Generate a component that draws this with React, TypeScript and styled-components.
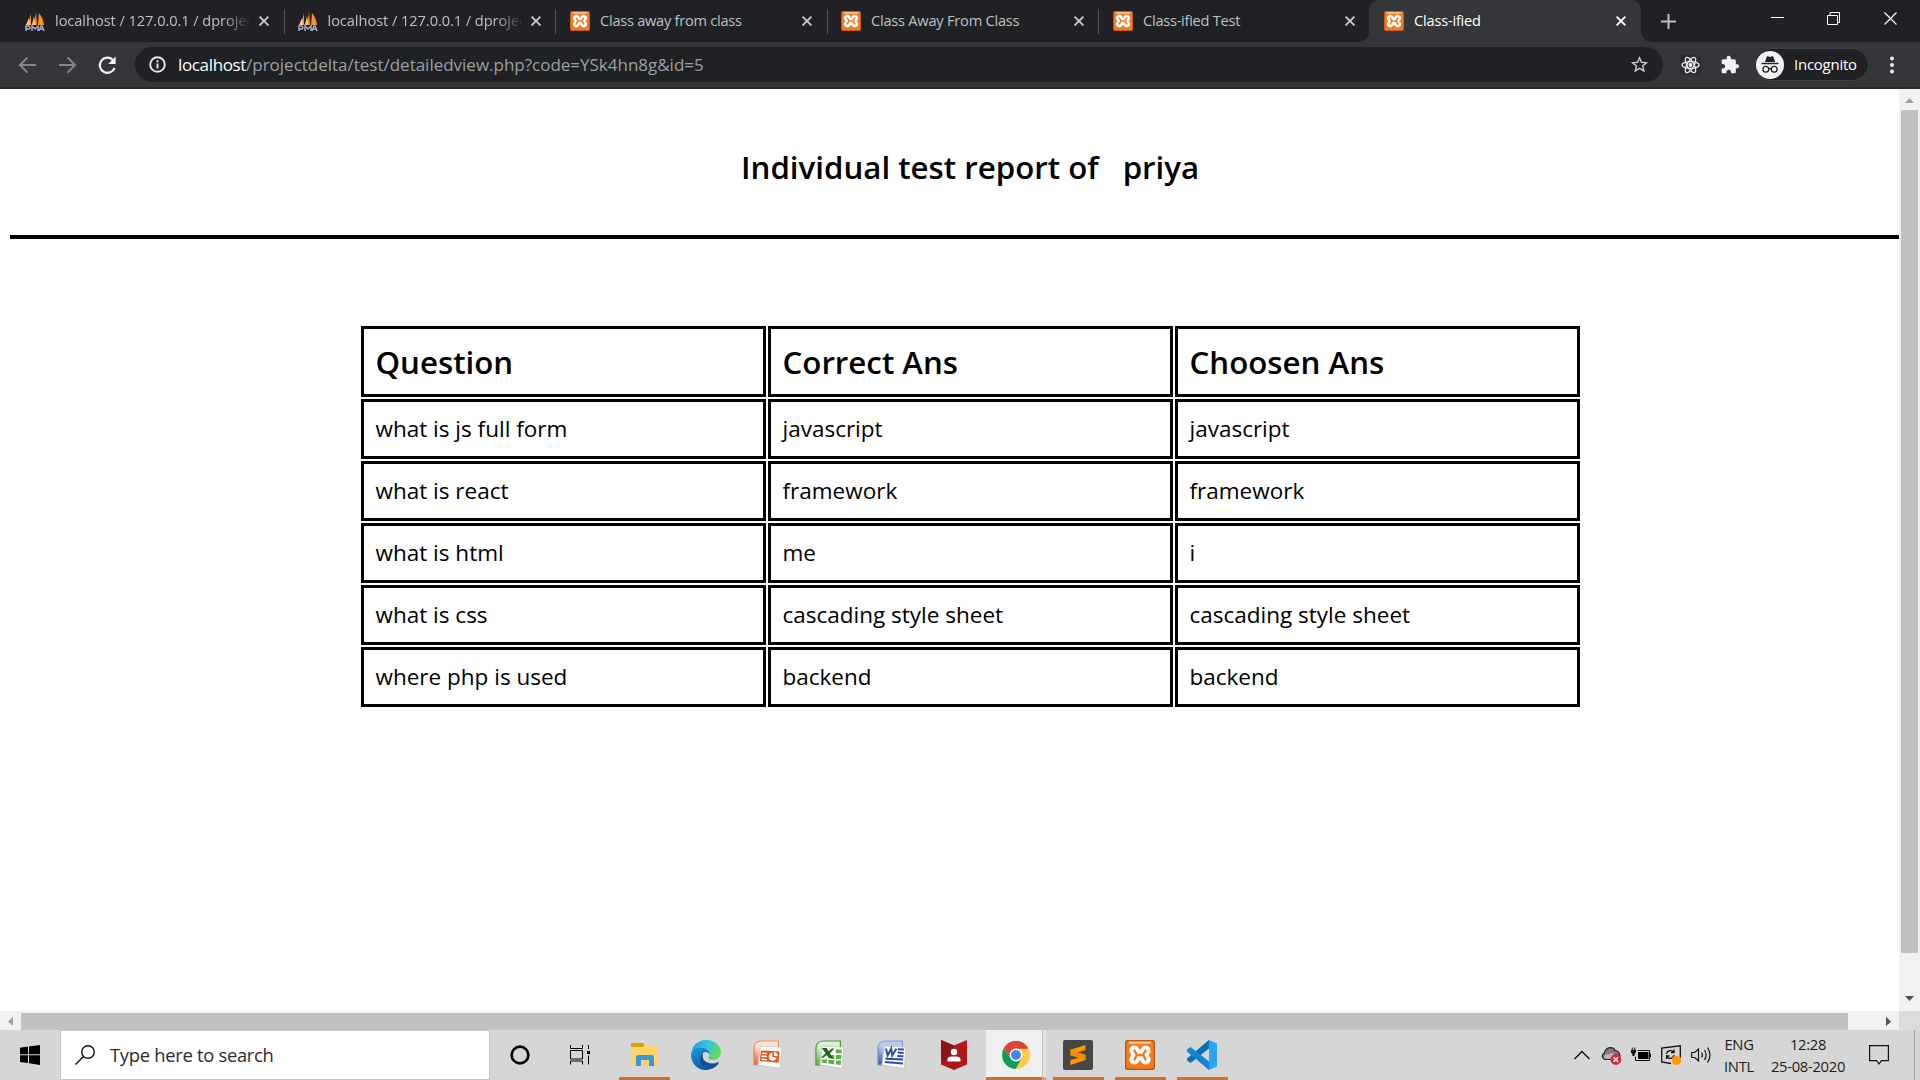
import React from 'react';
import styled, { createGlobalStyle } from 'styled-components';

const ui = `'Open Sans', 'Noto Sans', sans-serif`;

const Global = createGlobalStyle`
  * { box-sizing: border-box; }
  html, body { margin: 0; padding: 0; overflow: hidden; background: #fff; }
  svg { display: block; flex: none; overflow: visible; }
`;

const Screen = styled.div`
  width: 1920px;
  height: 1080px;
  display: flex;
  flex-direction: column;
  overflow: hidden;
  font-family: ${ui};
  background: #fff;
`;

/* ---------- tab strip ---------- */
const TabStrip = styled.div`
  height: 42px;
  flex: none;
  display: flex;
  background: #202124;
  padding-left: 13px;
`;

const Tab = styled.div<{ $active?: boolean; $line?: boolean; $lead: number }>`
  position: relative;
  width: ${p => (p.$active ? 272 : 271.5)}px;
  margin-left: ${p => (p.$active ? -1.5 : 0)}px;
  height: 42px;
  flex: none;
  display: flex;
  align-items: center;
  padding: 0 ${p => (p.$active ? 15 : 15.5)}px 0 ${p => p.$lead}px;
  gap: 10px;
  background: ${p => (p.$active ? '#35363a' : 'transparent')};
  border-radius: 10px 10px 0 0;
  color: ${p => (p.$active ? '#fff' : '#bdc1c6')};
  &::after {
    content: '';
    display: ${p => (p.$line ? 'block' : 'none')};
    position: absolute;
    right: 0;
    top: 9px;
    width: 1px;
    height: 25px;
    background: #55575b;
  }
`;

const TabCurve = styled.span<{ $side: 'left' | 'right' }>`
  position: absolute;
  bottom: 0;
  ${p => p.$side}: -10px;
  width: 10px;
  height: 10px;
  background: radial-gradient(circle at ${p => (p.$side === 'left' ? '0 0' : '100% 0')}, transparent 9.5px, #35363a 10px);
`;

const TabTitle = styled.span<{ $fade?: boolean; $spacing: number }>`
  flex: 1;
  min-width: 0;
  white-space: pre;
  font-size: 14.6px;
  line-height: 20px;
  padding-bottom: 2px;
  letter-spacing: ${p => p.$spacing}px;
  ${p => p.$fade && 'mask-image: linear-gradient(90deg, #000 168px, transparent 196px);'}
`;

const NewTab = styled.div`
  width: 76px;
  padding-left: 20px;
  display: flex;
  align-items: center;
`;

const WindowControls = styled.div`
  margin-left: auto;
  display: flex;
  padding: 12px 22px 0 0;
  gap: 43px;
`;

/* ---------- toolbar ---------- */
const Toolbar = styled.div`
  height: 47px;
  flex: none;
  display: flex;
  align-items: center;
  background: #35363a;
  border-bottom: 2px solid #28292c;
  padding-left: 17px;
`;

const NavButtons = styled.div`
  width: 118px;
  flex: none;
  display: flex;
  gap: 20px;
`;

const Omnibox = styled.div`
  width: 1528px;
  flex: none;
  height: 35px;
  border-radius: 18px;
  background: #202124;
  display: flex;
  align-items: center;
  padding: 0 12px 0 12px;
`;

const Url = styled.div`
  flex: 1;
  margin-left: 10px;
  font-size: 17px;
  line-height: 24px;
  letter-spacing: -0.01px;
  color: #9aa0a6;
  white-space: nowrap;
`;

const Host = styled.span`
  color: #fff;
  letter-spacing: -0.35px;
`;

const Extensions = styled.div`
  display: flex;
  flex: none;
  align-items: center;
  gap: 19px;
  margin-left: 17px;
`;

const Profile = styled.div`
  width: 115px;
  flex: none;
  height: 33px;
  border: 1px solid #3f4044;
  border-radius: 17px;
  background: #202124;
  margin: 0 17px 0 14px;
  padding-left: 1px;
  display: flex;
  align-items: center;
  gap: 9px;
  color: #fff;
  font-size: 14.9px;
  letter-spacing: -0.2px;
`;

const ProfileName = styled.span`
  padding: 0 0 1px 1px;
`;

/* ---------- page ---------- */
const Viewport = styled.div`
  flex: 1;
  min-height: 0;
  display: grid;
  grid-template-columns: 1899px 21px;
  grid-template-rows: 922px 19px;
`;

const Page = styled.main`
  padding-left: 10px;
  overflow: hidden;
  color: #000;
`;

const Title = styled.h1`
  margin: 0;
  height: 146px;
  padding: 57px 0 0 731px;
  font-size: 31.25px;
  line-height: 42px;
  font-weight: 600;
  white-space: pre;
  display: flex;
  gap: 24px;
`;

const Rule = styled.hr`
  margin: 0;
  border: 0;
  height: 4px;
  background: #000;
`;

const Report = styled.table`
  margin: 85px 0 0 349px;
  width: 1223px;
  border-spacing: 2px;
  table-layout: fixed;
`;

const HeadCell = styled.th`
  height: 71px;
  border: 3px solid #000;
  padding: 0 11.5px;
  text-align: left;
  font-size: 31.25px;
  line-height: 42px;
  font-weight: 600;
`;

const Cell = styled.td`
  height: 60px;
  border: 3px solid #000;
  padding: 0 11.5px 1px;
  font-size: 22.5px;
  line-height: 32px;
  font-weight: 400;
`;

const VScroll = styled.div`
  background: #f1f1f1;
  display: flex;
  flex-direction: column;
  align-items: center;
  justify-content: space-between;
  padding: 9px 0 10px;
`;
const VThumb = styled.div`
  width: 17px;
  height: 843px;
  background: #c1c1c1;
  margin: 7px 0 auto;
`;
const HScroll = styled.div`
  background: #f1f1f1;
  display: flex;
  align-items: center;
  padding: 2px 8px 0;
`;
const HThumb = styled.div`
  width: 1827px;
  height: 17px;
  background: #c1c1c1;
  margin: 0 auto 0 8px;
`;
const ScrollCorner = styled.div`
  background: #dcdcdc;
`;

/* ---------- taskbar ---------- */
const Taskbar = styled.div`
  height: 50px;
  flex: none;
  display: flex;
  background: #d6d6d6;
`;

const StartButton = styled.div`
  width: 60px;
  display: flex;
  align-items: center;
  justify-content: center;
`;

const SearchBox = styled.div`
  width: 430px;
  border: 1px solid #c6c6c6;
  background: #fff;
  display: flex;
  align-items: center;
  padding-left: 14px;
  gap: 15px;
  color: #2b2b2b;
  font-size: 18.4px;
  letter-spacing: -0.3px;
`;

const SearchHint = styled.span`
  padding-bottom: 2px;
`;

const SystemButton = styled.div`
  width: 60px;
  display: flex;
  align-items: center;
  justify-content: center;
`;

const Apps = styled.div`
  display: flex;
  margin-left: 3px;
`;

const AppTile = styled.div<{ $running?: boolean; $focused?: boolean }>`
  width: 62px;
  height: 50px;
  flex: none;
  display: flex;
  flex-direction: column;
  align-items: center;
  justify-content: center;
  position: relative;
  &::before {
    content: '';
    display: ${p => (p.$focused ? 'block' : 'none')};
    position: absolute;
    inset: 0 1px 0 1px;
    background: linear-gradient(90deg, #efefef 56px, #bdbdbd 56px 57px, #e3e3e3 57px);
  }
  &::after {
    content: '';
    display: ${p => (p.$running ? 'block' : 'none')};
    position: absolute;
    bottom: 0;
    left: ${p => (p.$focused ? 1 : 6)}px;
    width: ${p => (p.$focused ? 60 : 51)}px;
    height: 3px;
    background: ${p => (p.$focused ? 'linear-gradient(90deg, #cc7130 56px, #d9a27c 56px)' : '#cc7130')};
  }
  svg { z-index: 1; }
`;

const Tray = styled.div`
  margin-left: auto;
  display: flex;
  align-items: center;
  color: #1c1c1c;
`;

const TrayIcons = styled.div`
  display: flex;
  align-items: center;
  gap: 10px;
  margin-right: 13px;
`;

const TrayText = styled.div<{ $width: number; $gap?: number }>`
  width: ${p => p.$width}px;
  margin-right: ${p => p.$gap ?? 0}px;
  padding-bottom: 1px;
  text-align: center;
  font-size: 14.8px;
  line-height: 22px;
  letter-spacing: -0.3px;
  white-space: nowrap;
`;

const ShowDesktop = styled.div`
  width: 6px;
  height: 50px;
  border-left: 1px solid #a0a0a0;
  margin-left: 25px;
`;

/* ---------- icons ---------- */
const PmaIcon = () => (
  <svg width="20" height="20" viewBox="0 0 20 20">
    <path d="M6 2 6 14 1 14Q5 9 6 2M11 0 12 14 6.5 14Q11 8 11 0M14 2Q18 7 19 14L13 14Z" fill="#f7931e" />
    <path d="M4 7 1 14H5M9 5 7 14H10" fill="#f9c98b" />
    <path d="M1 20V15h3q2 2 0 3H1M7 20v-5l3 3 3-3v5M14 20l2-5h1l2 5M15 18h3" fill="none" stroke="#a4a8ce" strokeWidth="1.5" />
  </svg>
);

const XamppIcon = ({ size = 20 }: { size?: number }) => {
  const bone = 'M9.4 10.600 12 15 9.400 19.400M20.600 10.600 18 15l2.600 4.400M12 15h6';
  return (
    <svg width={size} height={size} viewBox="0 0 30 30">
      <rect width="30" height="30" rx="2.500" fill="#b8560f" />
      <rect x="1.200" y="1.200" width="27.600" height="27.600" rx="2" fill="#f47a20" />
      <path d="M3 1.500h24l-2 2.500H5z" fill="#f8b98c" />
      <g fill="none" strokeLinecap="round" strokeLinejoin="round">
        <path d={bone} stroke="#fff" strokeWidth="10" />
        <path d={bone} stroke="#f47a20" strokeWidth="2.400" />
      </g>
    </svg>
  );
};

const CloseIcon = ({ color }: { color: string }) => (
  <svg width="10" height="10" viewBox="0 0 10 10"><path d="M.6.6l8.800 8.800M9.400.6L.6 9.400" stroke={color} strokeWidth="2" /></svg>
);

const Arrow = ({ flip }: { flip?: boolean }) => (
  <svg width="20" height="20" viewBox="0 0 20 20">
    <path d={flip ? 'M2 10h16M10.500 2.400 18.100 10l-7.600 7.600' : 'M19 10H3M10.500 2.400 2.900 10l7.600 7.600'} fill="none" stroke="#85878a" strokeWidth="1.900" />
  </svg>
);

const Reload = () => (
  <svg width="20" height="20" viewBox="0 0 20 20">
    <path d="M17.600 12.800a7.600 7.600 0 1 1-1.900-8" fill="none" stroke="#f1f3f4" strokeWidth="2.200" />
    <path d="M18.600 1.500v7.400h-7.400z" fill="#f1f3f4" />
  </svg>
);

const Info = () => (
  <svg width="21" height="21" viewBox="0 0 21 21">
    <circle cx="10.500" cy="10.500" r="7.300" fill="none" stroke="#e8eaed" strokeWidth="1.900" />
    <path d="M10.500 9.400v5M10.500 6.300v2" stroke="#e8eaed" strokeWidth="1.900" />
  </svg>
);

const Star = () => (
  <svg width="23" height="24" viewBox="0 0 23 24">
    <path fill="#c9cbce" transform="translate(1.100 1.200) scale(.87)" d="M22 9.240l-7.190-.62L12 2 9.190 8.630 2 9.240l5.460 4.730L5.820 21 12 17.270 18.180 21l-1.630-7.030L22 9.240zM12 15.400l-3.760 2.270 1-4.280-3.320-2.880 4.380-.38L12 6.100l1.710 4.040 4.380.38-3.320 2.880 1 4.280L12 15.400z" />
  </svg>
);

const ReactIcon = () => (
  <svg width="21" height="20" viewBox="0 0 21 20">
    <rect width="21" height="20" rx="2" fill="#2c2d30" />
    <g fill="none" stroke="#e8eaed" strokeWidth="1.300">
      <ellipse cx="10.500" cy="10" rx="8.600" ry="3.400" />
      <ellipse cx="10.500" cy="10" rx="8.600" ry="3.400" transform="rotate(60 10.500 10)" />
      <ellipse cx="10.500" cy="10" rx="8.600" ry="3.400" transform="rotate(120 10.500 10)" />
    </g>
    <circle cx="10.500" cy="10" r="1.900" fill="#fff" />
  </svg>
);

const Puzzle = () => (
  <svg width="20" height="20" viewBox="0 0 24 24">
    <path fill="#f1f3f4" d="M20.500 11H19V7c0-1.100-.9-2-2-2h-4V3.500C13 2.120 11.880 1 10.500 1S8 2.120 8 3.500V5H4c-1.100 0-1.990.9-1.990 2v3.800H3.500c1.490 0 2.700 1.210 2.700 2.700s-1.210 2.700-2.700 2.700H2V20c0 1.100.9 2 2 2h3.800v-1.500c0-1.490 1.210-2.700 2.700-2.700 1.490 0 2.700 1.210 2.700 2.700V22H17c1.100 0 2-.9 2-2v-4h1.500c1.380 0 2.500-1.120 2.500-2.500S21.880 11 20.500 11z" />
  </svg>
);

const Incognito = () => (
  <svg width="28" height="28" viewBox="0 0 28 28">
    <circle cx="14" cy="14" r="14" fill="#f1f3f4" />
    <path d="M9 11 10.700 5.800Q11 5 12 5.300L14 6l2-.7q1-.3 1.300.5L19 11z" fill="#202124" />
    <path d="M5.500 12.500h17" stroke="#202124" strokeWidth="1.500" />
    <g fill="none" stroke="#202124" strokeWidth="1.300"><circle cx="9.800" cy="18.300" r="2.900" /><circle cx="18.200" cy="18.300" r="2.900" /><path d="M12.700 18q1.300-1 2.600 0" /></g>
  </svg>
);

const Triangle = ({ dir, color }: { dir: 'up' | 'down' | 'left' | 'right'; color: string }) => {
  const d = { up: 'M0 5 4.500 0 9 5z', down: 'M0 0h9L4.500 5z', left: 'M5 0v9L0 4.500z', right: 'M0 0v9l5-4.500z' }[dir];
  const wide = dir === 'up' || dir === 'down';
  return <svg width={wide ? 9 : 5} height={wide ? 5 : 9}><path d={d} fill={color} /></svg>;
};

const Explorer = () => (
  <svg width="30" height="30" viewBox="0 0 30 30">
    <path d="M2 3h12l1.500 2v4H2z" fill="#dea000" /><path d="M2 7h12l2-2h13v20q0 1-1 1H3q-1 0-1-1z" fill="#fdd466" />
    <path d="M7 26V17q0-2 2-2h14q2 0 2 2v9h-5v-6h-8v6z" fill="#3c96dc" />
  </svg>
);

const Edge = () => (
  <svg width="30" height="30" viewBox="0 0 30 30">
    <defs>
      <linearGradient id="eg1" x1="0" x2="1" y1=".2" y2=".6"><stop stopColor="#1e9fe0" /><stop offset=".5" stopColor="#35c1e0" /><stop offset="1" stopColor="#6bdf4b" /></linearGradient>
      <linearGradient id="eg2" x1="0" x2=".6" y1="0" y2="1"><stop stopColor="#1b9de2" /><stop offset="1" stopColor="#0c59a4" /></linearGradient>
    </defs>
    <path d="M.5 13C1 5 8 0 15 0c9 0 15 6 15 12.500 0 5-4 7.500-8 7.500-4 0-5.500-1.200-4-3.500 2-5-2-8-7-8C6 8.500 2 10 .5 13z" fill="url(#eg1)" />
    <path d="M0 15C0 9 6 7.500 10.500 7.700c5 .2 8.500 3.300 8.200 7-.8-1.700-2.400-2.700-4-2.700-3 0-4 3-4 6 0 7 6 11 9 10.800C18 29.700 16 30 14.500 30 6 30 0 23 0 15z" fill="url(#eg2)" />
    <path d="M11.800 13.500C6 19 10 29 18.500 29.300c4.500-.6 7.500-3 9.300-6.200.4-.8-.3-1.200-1-.8-6 3-14 .5-15-5z" fill="#124f97" />
  </svg>
);

const OfficeIcon = ({ kind }: { kind: 'ppt' | 'xls' | 'doc' }) => {
  const c = { ppt: '#e8501c', xls: '#5aa845', doc: '#2b4fa8' }[kind];
  const edge = { ppt: '#f58a5e', xls: '#4c9c33', doc: '#7f9dd6' }[kind];
  const l = { ppt: '#fde3d6', xls: '#dff0da', doc: '#b9cdf0' }[kind];
  return (
    <svg width="30" height="30" viewBox="0 0 30 30">
      <defs>
        <linearGradient id={`of-${kind}`} x1=".8" y1="0" x2="0" y2="1"><stop stopColor={l} /><stop offset=".45" stopColor={l} /><stop offset="1" stopColor={c} /></linearGradient>
      </defs>
      <g transform="translate(-.6 0)">
        <path d="M8.500 1H26v24H1.500V8Q2 1.500 8.500 1z" fill={`url(#of-${kind})`} stroke={edge} strokeWidth="1.200" />
        <path d="M8 6l21.500 1.200L28 28.500 5.500 25z" fill="#fbfbf8" stroke="#c4c4c4" strokeWidth=".8" />
        {kind === 'ppt' && (
          <>
            <path d="M8.500 10.500 27 11.500l-.9 11.300L7.500 21z" fill={c} />
            <path d="M9.500 13.300l5 .3M9.200 16.300l5.300.3M9 19.300l5.500.5" stroke="#fff" strokeWidth="1.500" />
            <path d="M20 12.800a4 4 0 1 0 4.200 5.200l-4.200-1.200z" fill="#fff" /><path d="M21.500 12v4l4 .2q-.3-3.700-4-4.200" fill="#fff" />
          </>
        )}
        {kind === 'xls' && (
          <>
            <path d="M21.500 9.500l6 .3-.3 3.500h-5.700zM21.500 15h5.600l-.3 4h-5.300zM21.500 20.500h5.200l-.4 4.500-4.800-.6zM14 20h5.800v4.300L14 23.500zM7.500 19.500h5v3.700l-5.400-.7zM17 15h3v4h-4z" fill="#5fae4c" />
            <path d="M7.500 8h4.800l2 3.200L17.500 8.500h2.300l-4.400 5L19 18h-4.500l-2.200-3-3.500 2.800H6.500l4.700-4.600z" fill="#1d651a" />
          </>
        )}
        {kind === 'doc' && (
          <>
            <path d="M21.500 9.300l6 .3M21.300 12.600l6 .3M21 16l6 .3M9 18.700l17.800.8M8.500 22l18 1.500" stroke={c} strokeWidth="2" />
            <path d="M9.500 8.500l1.800 7 3.500-7 1 7L20 8.500" stroke={c} strokeWidth="2" fill="none" />
          </>
        )}
      </g>
    </svg>
  );
};

const McAfee = () => (
  <svg width="30" height="30" viewBox="0 0 30 30">
    <path d="M2 0 15 5.500 28 0v24.500L15 30 2 24.500z" fill="#b01717" /><path d="M2 0 15 5.500v7L2 24z" fill="#8d1414" />
    <circle cx="15" cy="12" r="3.200" fill="#fff" /><path d="M8.500 21.500v-2q0-3 4-3h5q4 0 4 3v2z" fill="#fff" />
  </svg>
);

const Chrome = () => (
  <svg width="28" height="28" viewBox="0 0 28 28">
    <path d="M14 14 1.900 7A14 14 0 0 1 26.100 7z" fill="#db4437" /><path d="M14 14V7.500h12.400A14 14 0 0 1 14 28z" fill="#ffcd40" />
    <path d="M14 14 19.600 17.200 13.600 28A14 14 0 0 1 1.900 7L8.400 17.200z" fill="#0f9d58" /><path d="M1.900 7A14 14 0 0 1 26.400 7.500H14L8.400 17.500z" fill="#db4437" />
    <circle cx="14" cy="14" r="6.400" fill="#fff" /><circle cx="14" cy="14" r="5" fill="#4285f4" />
  </svg>
);

const Sublime = () => (
  <svg width="30" height="30" viewBox="0 0 30 30">
    <rect width="30" height="30" rx="2" fill="#474747" />
    <path d="M22.500 5 7.500 9.800v5.400L16 17.800 7.500 20v5L22.500 20v-5l-8-2.500L22.500 10z" fill="#ff9800" /><path d="M7.500 10v5.200l15 4.800v-5z" fill="#f09000" />
  </svg>
);

const VsCode = () => (
  <svg width="30" height="30" viewBox="0 0 30 30">
    <path d="M22 0v30l8-3.500v-23z" fill="#29a8f2" /><path d="M22 0v8.500L3.500 23 0 20.500v-2z" fill="#0a6fb5" />
    <path d="M22 30v-8.500L3.500 7 0 9.500v2z" fill="#0f86d0" />
  </svg>
);

const tabs = [
  { title: 'localhost / 127.0.0.1 / dprojec', icon: 'pma', sp: -0.05, lead: 12 },
  { title: 'localhost / 127.0.0.1 / dprojec', icon: 'pma', sp: -0.05, lead: 13 },
  { title: 'Class away from class', icon: 'x', sp: -0.25, lead: 14 },
  { title: 'Class Away From Class', icon: 'x', sp: -0.22, lead: 13.5 },
  { title: 'Class-ified Test', icon: 'x', sp: -0.25, lead: 14 },
  { title: 'Class-ified', icon: 'x', sp: -0.2, lead: 15 },
];

const rows = [
  ['what is js full form', 'javascript', 'javascript'],
  ['what is react', 'framework', 'framework'],
  ['what is html', 'me', 'i'],
  ['what is css', 'cascading style sheet', 'cascading style sheet'],
  ['where php is used', 'backend', 'backend'],
];

export default function App() {
  return (
    <Screen>
      <Global />
      <TabStrip>
        {tabs.map((t, i) => {
          const active = i === tabs.length - 1;
          return (
            <Tab key={i} $active={active} $line={i < 4} $lead={t.lead}>
              {active && <><TabCurve $side="left" /><TabCurve $side="right" /></>}
              {t.icon === 'pma' ? <PmaIcon /> : <XamppIcon />}
              <TabTitle $fade={i < 2} $spacing={t.sp}>{t.title}</TabTitle>
              <CloseIcon color={active ? '#fff' : '#c4c7ca'} />
            </Tab>
          );
        })}
        <NewTab><svg width="15" height="15"><path d="M7.500 0v15M0 7.500h15" stroke="#bdc1c6" strokeWidth="2" /></svg></NewTab>
        <WindowControls>
          <svg width="13" height="13"><path d="M0 5.500h13" stroke="#fff" /></svg>
          <svg width="14" height="14"><path d="M.5 3.500h10v9H.5zM3 3V.5h9.500v10H11" fill="none" stroke="#fff" /></svg>
          <svg width="14" height="14"><path d="M.5.5l12 12M12.500.5l-12 12" stroke="#fff" strokeWidth="1.200" /></svg>
        </WindowControls>
      </TabStrip>
      <Toolbar>
        <NavButtons><Arrow /><Arrow flip /><Reload /></NavButtons>
        <Omnibox>
          <Info />
          <Url><Host>localhost</Host>/projectdelta/test/detailedview.php?code=YSk4hn8g&amp;id=5</Url>
          <Star />
        </Omnibox>
        <Extensions><ReactIcon /><Puzzle /></Extensions>
        <Profile><Incognito /><ProfileName>Incognito</ProfileName></Profile>
        <svg width="20" height="20" viewBox="0 0 20 20"><g fill="#e8eaed"><circle cx="6" cy="3.500" r="2" /><circle cx="6" cy="10" r="2" /><circle cx="6" cy="16.500" r="2" /></g></svg>
      </Toolbar>
      <Viewport>
        <Page>
          <Title><span>Individual test report of</span><span>priya</span></Title>
          <Rule />
          <Report>
            <thead><tr><HeadCell>Question</HeadCell><HeadCell>Correct Ans</HeadCell><HeadCell>Choosen Ans</HeadCell></tr></thead>
            <tbody>{rows.map(r => <tr key={r[0]}>{r.map((c, i) => <Cell key={i}>{c}</Cell>)}</tr>)}</tbody>
          </Report>
        </Page>
        <VScroll><Triangle dir="up" color="#a3a3a3" /><VThumb /><Triangle dir="down" color="#505050" /></VScroll>
        <HScroll><Triangle dir="left" color="#a3a3a3" /><HThumb /><Triangle dir="right" color="#505050" /></HScroll>
        <ScrollCorner />
      </Viewport>
      <Taskbar>
        <StartButton>
          <svg width="20" height="20" viewBox="0 0 20 20"><path d="M0 2.800 8 1.600v7.700H0zM9 1.400 20 0v9.300H9zM0 10.300h8V18L0 17zM9 10.300h11V20L9 18.300z" /></svg>
        </StartButton>
        <SearchBox>
          <svg width="20" height="20" viewBox="0 0 20 20"><circle cx="13" cy="7" r="6.300" fill="none" stroke="#111" strokeWidth="1.400" /><path d="M8.500 11.500.5 19.500" stroke="#111" strokeWidth="1.500" /></svg>
          <SearchHint>Type here to search</SearchHint>
        </SearchBox>
        <SystemButton>
          <svg width="20" height="20"><circle cx="10" cy="10" r="8.400" fill="none" stroke="#000" strokeWidth="2.600" /></svg>
        </SystemButton>
        <SystemButton>
          <svg width="20" height="20" viewBox="0 0 20 20"><path d="M.5 0v3.500h12V0M.5 5.500h12v8.500H.5zM.5 19.500V16h12v3.500M18.500 0v4M18.500 10.500v9" fill="none" stroke="#000" /><path d="M17 6h3v3h-3z" /></svg>
        </SystemButton>
        <Apps>
          <AppTile $running><Explorer /></AppTile>
          <AppTile><Edge /></AppTile>
          <AppTile><OfficeIcon kind="ppt" /></AppTile>
          <AppTile><OfficeIcon kind="xls" /></AppTile>
          <AppTile><OfficeIcon kind="doc" /></AppTile>
          <AppTile><McAfee /></AppTile>
          <AppTile $running $focused><Chrome /></AppTile>
          <AppTile $running><Sublime /></AppTile>
          <AppTile $running><XamppIcon size={30} /></AppTile>
          <AppTile $running><VsCode /></AppTile>
        </Apps>
        <Tray>
          <TrayIcons>
            <svg width="18" height="20" viewBox="0 0 18 20"><path d="M1.500 14 9 6.500l7.500 7.500" fill="none" stroke="#111" strokeWidth="1.400" /></svg>
            <svg width="20" height="20" viewBox="0 0 20 20"><path d="M4 14.500a3.500 3.500 0 0 1-.8-6.500Q5 3 9 2.700 13 2.500 14 5.500q4 .5 4.800 4.500v4.500z" fill="#7e7e7e" stroke="#222" strokeWidth="1.200" /><path d="M3.500 13.800Q2.500 9 7.500 9.500q3-3 6 0v4.300z" fill="#b8b8b8" /><circle cx="14.800" cy="14.500" r="5.400" fill="#e02433" /><path d="M12.600 12.300l4.400 4.400M17 12.300l-4.400 4.400" stroke="#fff" strokeWidth="1.400" /></svg>
            <svg width="20" height="20" viewBox="0 0 20 20"><path d="M6.500 5.500h12v10H4.500v-4" fill="none" stroke="#111" /><path d="M7 7h10.500v7H7zM18.500 8.500H20v4h-1.500zM0 5h5v2.500L3.500 9v2h-2V9L0 7.500zM.8 2.500h1V5h-1zM3.300 2.500h1V5h-1z" /></svg>
            <svg width="20" height="20" viewBox="0 0 20 20"><path d="M10 18.500.7 17V3L19.300.8v12" fill="none" stroke="#111" strokeWidth="1.300" /><path d="M5.500 9a4 4 0 0 1 7-2M13 4.500v3h-3M13 10a4 4 0 0 1-7 2M5.500 14v-3h3" fill="none" stroke="#111" strokeWidth="1.300" /><circle cx="15.500" cy="15.500" r="4.600" fill="#ff9800" /></svg>
            <svg width="20" height="20" viewBox="0 0 20 20"><path d="M.7 7.500h3L7.500 4v12l-3.800-3.500h-3zM10.500 7.500q1.800 2.500 0 5M13.500 5q3.300 5 0 10M16.500 2.500q5 7.500 0 15" fill="none" stroke="#111" strokeWidth="1.200" /></svg>
          </TrayIcons>
          <TrayText $width={30} $gap={16}>ENG<br />INTL</TrayText>
          <TrayText $width={76} $gap={23}>12:28<br />25-08-2020</TrayText>
          <svg width="20" height="20" viewBox="0 0 20 20"><path d="M.6.6h18.800v15h-7L10 19l-2.400-3.400h-7z" fill="none" stroke="#111" strokeWidth="1.200" /></svg>
          <ShowDesktop />
        </Tray>
      </Taskbar>
    </Screen>
  );
}
